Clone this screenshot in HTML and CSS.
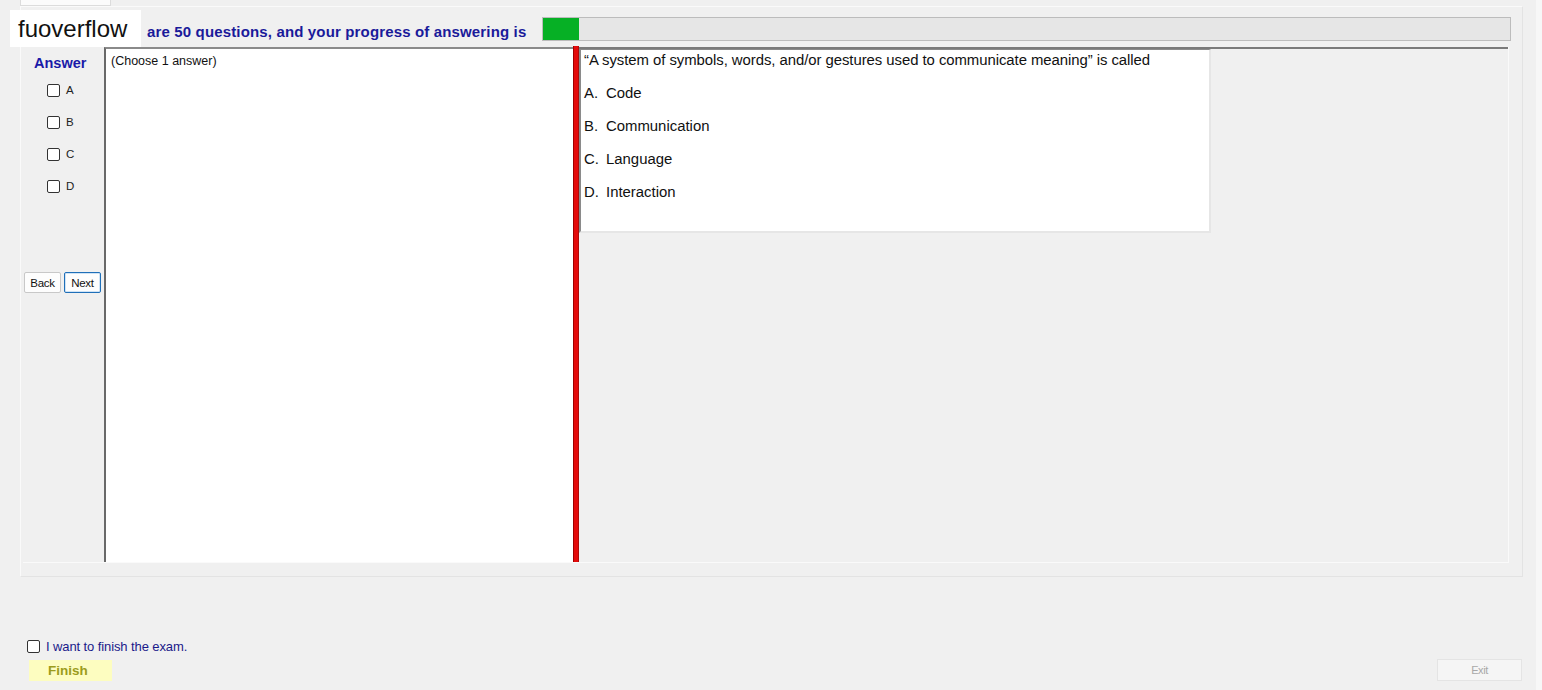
FILE: index.html
```html
<!DOCTYPE html>
<html lang="en">
<head>
    <meta charset="UTF-8">
    <title>Exam</title>
    <link rel="stylesheet" href="styles.css">
</head>
<body>
    <div class="window">
        <div class="tabs">
            <div class="tab"></div>
        </div>

        <div class="tab-page">
            <div class="header">
                <div class="header-text">are 50 questions, and your progress of answering is</div>
                <div class="progress"><div class="progress-fill" style="width: 36px"></div></div>
            </div>

            <div class="group">
                <div class="answer-col">
                    <div class="answer-title">Answer</div>
                    <label class="opt"><span class="box"></span>A</label>
                    <label class="opt"><span class="box"></span>B</label>
                    <label class="opt"><span class="box"></span>C</label>
                    <label class="opt"><span class="box"></span>D</label>
                    <div class="nav">
                        <button class="btn">Back</button>
                        <button class="btn btn-focus">Next</button>
                    </div>
                </div>
                <div class="hint-panel">(Choose 1 answer)</div>
                <div class="splitter"></div>
                <div class="question-area">
                    <div class="question">
                        <p class="q-text">&ldquo;A system of symbols, words, and/or gestures used to communicate meaning&rdquo; is called</p>
                        <p class="q-opt"><span class="letter">A.</span>Code</p>
                        <p class="q-opt"><span class="letter">B.</span>Communication</p>
                        <p class="q-opt"><span class="letter">C.</span>Language</p>
                        <p class="q-opt"><span class="letter">D.</span>Interaction</p>
                    </div>
                </div>
            </div>
        </div>

        <div class="footer">
            <div class="finish-side">
                <label class="finish-check"><span class="box"></span>I want to finish the exam.</label>
                <button class="finish-btn">Finish</button>
            </div>
            <button class="exit-btn">Exit</button>
        </div>

        <div class="watermark">fuoverflow</div>
    </div>
</body>
</html>
```

FILE: styles.css
```css
* {
    margin: 0;
    padding: 0;
    box-sizing: border-box;
}

body {
    background: #f0f0f0;
    font-family: 'Liberation Sans', Arial, sans-serif;
    color: #000;
    overflow: hidden;
}

.window {
    position: relative;
    width: 1542px;
    height: 690px;
    border-right: 6px solid #f7f7f7;
}

.tabs {
    height: 6px;
    padding-left: 20px;
}

.tab {
    width: 91px;
    height: 6px;
    background: #fbfbfb;
    border: 1px solid #dcdcdc;
    border-top: none;
}

.tab-page {
    margin-left: 20px;
    width: 1503px;
    height: 571px;
    border: 1px solid #fafafa;
    border-right-color: #e3e3e3;
    border-bottom-color: #e3e3e3;
    padding: 10px 0 0 2px;
}

.header {
    display: flex;
    align-items: center;
    height: 24px;
}

.header-text {
    width: 519px;
    padding-left: 124px;
    color: #1a1a9a;
    font-weight: bold;
    font-size: 15px;
    letter-spacing: 0.15px;
    padding-top: 5px;
}

.progress {
    width: 969px;
    height: 24px;
    background: #e6e6e6;
    border: 1px solid #bcbcbc;
}

.progress-fill {
    height: 100%;
    background: #06b025;
}

.group {
    display: flex;
    margin-top: 6px;
    width: 1486px;
    height: 516px;
    border-right: 1px solid #fafafa;
    border-bottom: 1px solid #fafafa;
}

.answer-col {
    width: 81px;
    display: flex;
    flex-direction: column;
}

.answer-title {
    color: #1a1aa8;
    font-weight: bold;
    font-size: 14.5px;
    padding: 8px 0 0 11px;
    height: 27px;
}

.opt {
    display: flex;
    align-items: center;
    height: 32px;
    padding-left: 24px;
    font-size: 11.5px;
    gap: 6px;
    color: #222;
}

.box {
    width: 13px;
    height: 13px;
    border: 1px solid #333;
    border-radius: 2px;
    background: #fff;
}

.nav {
    display: flex;
    gap: 3px;
    margin-top: 70px;
    padding-left: 1px;
}

.btn {
    width: 37px;
    height: 21px;
    font-family: 'Liberation Sans', Arial, sans-serif;
    font-size: 11.5px;
    letter-spacing: -0.3px;
    background: #fdfdfd;
    border: 1px solid #c8c8c8;
    border-radius: 2px;
    color: #111;
}

.btn-focus {
    border: 1px solid #1f6fb8;
    box-shadow: inset 0 0 0 1px #cfe3f5;
}

.hint-panel {
    width: 469px;
    background: #fff;
    border-top: 2px solid #8a8a8a;
    border-left: 2px solid #696969;
    font-size: 12.5px;
    padding: 5px 0 0 5px;
    color: #111;
}

.splitter {
    width: 6px;
    margin-top: -1px;
    background: #e40b0b;
    border-left: 1px solid #a00000;
    border-right: 1px solid #b00a0a;
}

.question-area {
    flex: 1;
    border-top: 2px solid #7a7a7a;
}

.question {
    width: 632px;
    height: 184px;
    background: #fff;
    border-left: 2px solid #8a8a8a;
    border-top: 1px solid #8a8a8a;
    border-right: 2px solid #e6e6e6;
    border-bottom: 2px solid #e6e6e6;
    padding: 2px 0 0 3px;
    font-size: 14.9px;
    color: #111;
}

.q-text {
    height: 33px;
    letter-spacing: -0.05px;
}

.q-opt {
    height: 33px;
    display: flex;
}

.letter {
    width: 22px;
}

.footer {
    display: flex;
    justify-content: space-between;
    align-items: flex-end;
    padding: 0 14px 9px 27px;
    height: 113px;
}

.finish-side {
    display: flex;
    flex-direction: column;
}

.finish-check {
    display: flex;
    align-items: center;
    gap: 6px;
    color: #1a1a8a;
    font-size: 13px;
    letter-spacing: -0.1px;
}

.finish-btn {
    margin: 6px 0 0 2px;
    width: 83px;
    height: 21px;
    background: #fdfdc0;
    border: none;
    color: #9c9c1c;
    font-family: 'Liberation Sans', Arial, sans-serif;
    font-weight: bold;
    font-size: 13.5px;
    text-align: left;
    padding-left: 19px;
}

.exit-btn {
    width: 85px;
    height: 22px;
    background: #f5f5f5;
    border: 1px solid #e4e4e4;
    color: #a8a8a8;
    font-family: 'Liberation Sans', Arial, sans-serif;
    font-size: 11px;
    letter-spacing: -0.4px;
}

/* site label laid over the header */
.watermark {
    position: absolute;
    left: 10px;
    top: 10px;
    width: 131px;
    height: 37px;
    background: #fff;
    font-size: 24px;
    padding: 7px 0 0 8px;
    line-height: 1;
    color: #111;
}
```
